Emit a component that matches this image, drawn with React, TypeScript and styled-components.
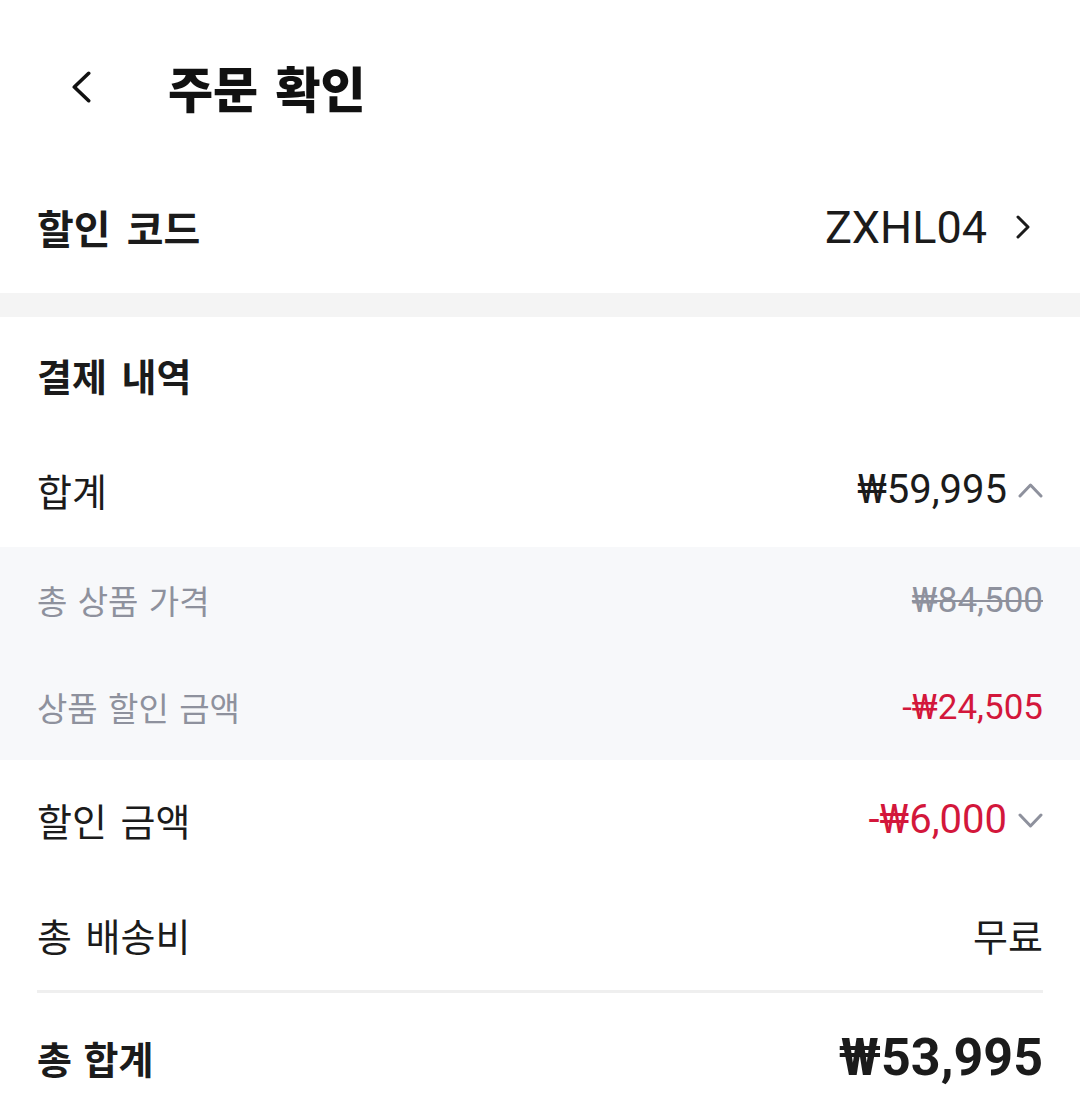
import React from "react";
import styled, { createGlobalStyle } from "styled-components";

const GlobalStyle = createGlobalStyle`
  html, body { margin: 0; padding: 0; background: #ffffff; }
  body { font-family: "Noto Sans CJK KR", Roboto, sans-serif; color: #1b1b1b; }
  * { box-sizing: border-box; }
`;

const KR = `"Noto Sans CJK KR", Roboto, sans-serif`;
const NUM = `Roboto, "Noto Sans CJK KR", sans-serif`;

const Page = styled.div`
  width: 1080px;
  display: flex;
  flex-direction: column;
  background: #ffffff;
`;

const Header = styled.header`
  height: 173px;
  display: flex;
  align-items: center;
  padding-left: 72px;
  gap: 77px;
`;

const BackButton = styled.button`
  border: none;
  background: none;
  padding: 0;
  width: 19px;
  height: 32px;
  display: flex;
  align-items: center;
  justify-content: center;
  color: #111;
`;

const Title = styled.h1`
  margin: 0;
  font-family: ${KR};
  font-weight: 900;
  font-size: 49px;
  word-spacing: 6px;
  line-height: 1;
  color: #111;
`;

const CodeRow = styled.div`
  height: 120px;
  padding: 0 50px 12px 37px;
  display: flex;
  align-items: center;
  justify-content: space-between;
`;

const CodeLabel = styled.span`
  font-family: ${KR};
  font-weight: 700;
  font-size: 40px;
  word-spacing: 7px;
  line-height: 1;
  color: #1b1b1b;
`;

const CodeValue = styled.span`
  display: flex;
  align-items: center;
  gap: 29px;
  font-family: ${NUM};
  font-size: 45px;
  line-height: 1;
  color: #1b1b1b;
`;

const Band = styled.div`
  height: 24px;
  background: #f4f4f4;
`;

const SectionTitle = styled.h2`
  margin: 0;
  height: 116px;
  padding: 0 37px;
  display: flex;
  align-items: center;
  font-family: ${KR};
  font-weight: 700;
  font-size: 38px;
  word-spacing: 6px;
  line-height: 1;
  color: #1b1b1b;
`;

const Row = styled.div<{ $h: number }>`
  height: ${(p) => p.$h}px;
  padding: 0 37px;
  display: flex;
  align-items: center;
  justify-content: space-between;
`;

const Label = styled.span`
  font-family: ${KR};
  font-size: 38px;
  word-spacing: 5px;
  line-height: 1;
  color: #1b1b1b;
`;

const Amount = styled.span<{ $red?: boolean }>`
  display: flex;
  align-items: center;
  gap: 11px;
  font-family: ${NUM};
  font-size: 40px;
  line-height: 1;
  color: ${(p) => (p.$red ? "#d3173b" : "#1b1b1b")};
`;

const Plain = styled.span`
  font-family: ${KR};
  font-size: 38px;
  line-height: 1;
  color: #1b1b1b;
`;

const SubBox = styled.div`
  background: #f7f8fa;
  display: flex;
  flex-direction: column;
`;

const SubLabel = styled.span`
  font-family: ${KR};
  font-size: 33px;
  word-spacing: 3px;
  line-height: 1;
  color: #8e919d;
`;

const SubAmount = styled.span<{ $red?: boolean; $strike?: boolean }>`
  font-family: ${NUM};
  font-size: 35px;
  line-height: 1;
  color: ${(p) => (p.$red ? "#d3173b" : "#8e919d")};
  text-decoration: ${(p) => (p.$strike ? "line-through" : "none")};
  text-decoration-thickness: 2px;
`;

const Divider = styled.hr`
  margin: 0 37px;
  border: none;
  height: 3px;
  background: #efefef;
`;

const TotalLabel = styled.span`
  font-family: ${KR};
  font-weight: 700;
  font-size: 38px;
  word-spacing: 3px;
  line-height: 1;
  color: #1b1b1b;
`;

const TotalAmount = styled.span`
  font-family: ${NUM};
  font-weight: 700;
  font-size: 52px;
  line-height: 1;
  color: #1b1b1b;
`;

const Chevron = ({ dir, color, w, h, sw }: { dir: "left" | "right" | "up" | "down"; color: string; w: number; h: number; sw: number }) => {
  const p = sw / 2 + 0.5;
  let pts = "";
  if (dir === "left") pts = `${w - p},${p} ${p},${h / 2} ${w - p},${h - p}`;
  if (dir === "right") pts = `${p},${p} ${w - p},${h / 2} ${p},${h - p}`;
  if (dir === "up") pts = `${p},${h - p} ${w / 2},${p} ${w - p},${h - p}`;
  if (dir === "down") pts = `${p},${p} ${w / 2},${h - p} ${w - p},${p}`;
  return (
    <svg width={w} height={h} viewBox={`0 0 ${w} ${h}`} fill="none">
      <polyline points={pts} stroke={color} strokeWidth={sw} strokeLinecap="round" strokeLinejoin="round" />
    </svg>
  );
};

export default function App() {
  return (
    <Page>
      <GlobalStyle />
      <Header>
        <BackButton aria-label="back">
          <Chevron dir="left" color="#111" w={19} h={32} sw={3.6} />
        </BackButton>
        <Title>주문 확인</Title>
      </Header>

      <CodeRow>
        <CodeLabel>할인 코드</CodeLabel>
        <CodeValue>
          ZXHL04
          <Chevron dir="right" color="#1b1b1b" w={14} h={24} sw={3} />
        </CodeValue>
      </CodeRow>

      <Band />

      <SectionTitle>결제 내역</SectionTitle>

      <Row $h={114}>
        <Label>합계</Label>
        <Amount>
          ₩59,995
          <Chevron dir="up" color="#8e919d" w={25} h={15} sw={3} />
        </Amount>
      </Row>

      <SubBox>
        <Row $h={107}>
          <SubLabel>총 상품 가격</SubLabel>
          <SubAmount $strike>₩84,500</SubAmount>
        </Row>
        <Row $h={106}>
          <SubLabel>상품 할인 금액</SubLabel>
          <SubAmount $red>-₩24,505</SubAmount>
        </Row>
      </SubBox>

      <Row $h={120}>
        <Label>할인 금액</Label>
        <Amount $red>
          -₩6,000
          <Chevron dir="down" color="#8e919d" w={25} h={15} sw={3} />
        </Amount>
      </Row>

      <Row $h={110}>
        <Label>총 배송비</Label>
        <Plain>무료</Plain>
      </Row>

      <Divider />

      <Row $h={130}>
        <TotalLabel>총 합계</TotalLabel>
        <TotalAmount>₩53,995</TotalAmount>
      </Row>
    </Page>
  );
}
